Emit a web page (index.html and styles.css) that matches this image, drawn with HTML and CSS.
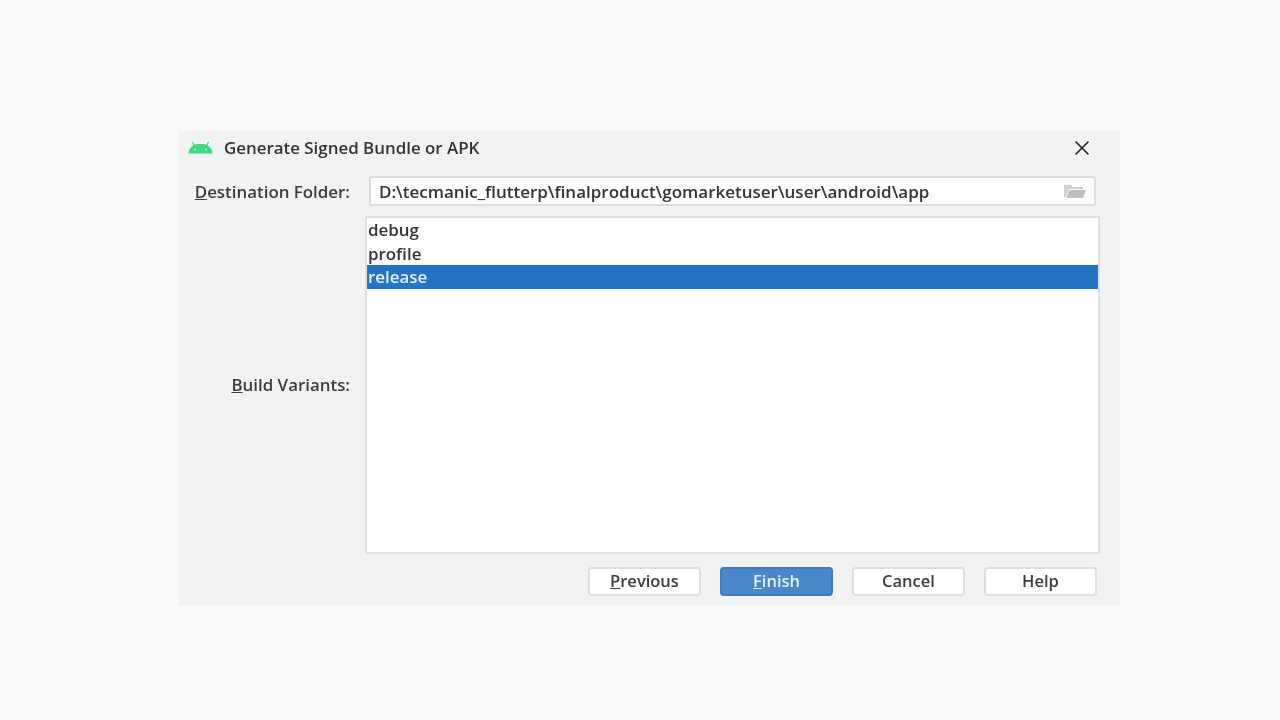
FILE: index.html
```html
<!DOCTYPE html>
<html lang="en">
<head>
<meta charset="utf-8">
<title>Generate Signed Bundle or APK</title>
<link rel="stylesheet" href="styles.css">
</head>
<body>
<main class="dialog">
  <header class="titlebar">
    <svg class="android" viewBox="0 0 25 13" aria-hidden="true">
      <path class="android-body" d="M0.5 12.5C0.8 9 2 6.2 5.6 4.2L3.8 1 4.8 0.4 6.8 3.7C8.6 3.1 10.6 3 12.5 3S16.4 3.1 18.2 3.7L20.2 0.4 21.2 1 19.4 4.2C23 6.2 24.2 9 24.5 12.5Z"/>
      <circle class="android-eye" cx="7" cy="8.6" r="0.9"/>
      <circle class="android-eye" cx="18" cy="8.6" r="0.9"/>
    </svg>
    <h1 class="title">Generate Signed Bundle or APK</h1>
    <svg class="close" viewBox="0 0 16 16" aria-hidden="true">
      <path d="M1.5 1.5L14.5 14.5M14.5 1.5L1.5 14.5"/>
    </svg>
  </header>
  <div class="row-folder">
    <label class="label"><u>D</u>estination Folder:</label>
    <div class="field">
      <span class="path">D:\tecmanic_flutterp\finalproduct\gomarketuser\user\android\app</span>
      <svg class="folder" viewBox="0 0 22 14" aria-hidden="true">
        <path class="folder-back" d="M0 1H7L9 3H19V5H5L2 13H0Z"/>
        <path class="folder-front" d="M5.5 6H22L19 14H2.5Z"/>
      </svg>
    </div>
  </div>
  <div class="row-variants">
    <label class="label"><u>B</u>uild Variants:</label>
    <ul class="list">
      <li class="item">debug</li>
      <li class="item">profile</li>
      <li class="item selected">release</li>
    </ul>
  </div>
  <footer class="buttons">
    <button class="btn"><u>P</u>revious</button>
    <button class="btn primary"><u>F</u>inish</button>
    <button class="btn">Cancel</button>
    <button class="btn">Help</button>
  </footer>
</main>
</body>
</html>
```
FILE: styles.css
```css
* { box-sizing: border-box; }
html, body { height: 100%; }
body {
  margin: 0;
  padding: 131px 0 0 179px;
  background: #fafafa;
  font-family: "Open Sans", "Noto Sans", sans-serif;
  font-size: 16.9px;
  color: #333;
}
.dialog {
  width: 941px;
  height: 475px;
  background: #f2f2f2;
  display: flex;
  flex-direction: column;
  padding: 0 20px 10px 9px;
  filter: blur(0.45px);
}
.titlebar {
  height: 34px;
  flex: none;
  display: flex;
  align-items: center;
}
.android { width: 25px; height: 13px; flex: none; margin-bottom: 2px; }
.android-body { fill: #3ddc84; }
.android-eye { fill: #f2f2f2; }
.title {
  margin: 0 0 2px 11px;
  font-size: 16.9px;
  font-weight: 600;
  color: #333;
  flex: 1;
}
.close { width: 16px; height: 16px; flex: none; margin: 0 10px 1px 0; }
.close path { stroke: #222; stroke-width: 1.6; fill: none; }
.row-folder {
  display: flex;
  align-items: center;
  margin-top: 11px;
  flex: none;
}
.label {
  width: 162px;
  flex: none;
  text-align: right;
  font-weight: 600;
  color: #3c3c3c;
  white-space: nowrap;
}
.field {
  margin-left: 19px;
  width: 727px;
  height: 30px;
  background: #fff;
  border: 2px solid #dcdcdc;
  border-radius: 2px;
  display: flex;
  align-items: center;
  justify-content: space-between;
  padding: 0 8px 0 8px;
}
.path { font-size: 17px; font-weight: 600; color: #333; white-space: nowrap; }
.folder { width: 22px; height: 14px; flex: none; }
.folder-back { fill: #cfcfcf; }
.folder-front { fill: #bcbfc2; }
.row-variants {
  display: flex;
  align-items: center;
  margin-top: 10px;
  flex: 1;
  min-height: 0;
}
.row-variants .list { margin-left: 15px; }
.list {
  list-style: none;
  margin: 0;
  padding: 0;
  width: 736px;
  height: 338px;
  background: #fff;
  border: 2px solid #e0e0e0;
  align-self: flex-start;
}
.row-variants .label { margin-top: -1px; }
.item {
  height: 23.5px;
  line-height: 23.5px;
  padding-left: 1px;
  font-weight: 600;
  color: #333;
}
.selected { background: #2673c3; color: #e6f0fa; }
.buttons {
  display: flex;
  justify-content: flex-end;
  gap: 19px;
  margin: 13px 3px 0 0;
  flex: none;
}
.btn {
  width: 113px;
  height: 29px;
  padding: 0 0 2px;
  background: #fff;
  border: 2px solid #dedede;
  border-radius: 4px;
  font: 600 16.5px "Open Sans", "Noto Sans", sans-serif;
  color: #3c3c3c;
}
.primary { background: #4a86c8; border-color: #4079b8; color: #e8f1fa; }
```
